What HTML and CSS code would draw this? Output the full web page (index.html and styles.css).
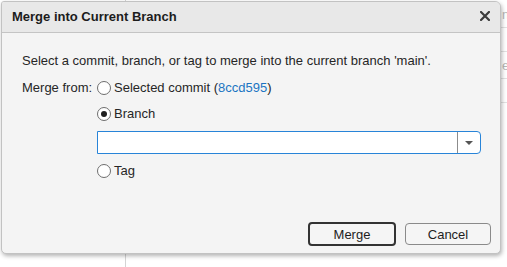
FILE: index.html
```html
<!DOCTYPE html>
<html lang="en">
<head>
    <meta charset="UTF-8">
    <meta name="viewport" content="width=device-width, initial-scale=1.0">
    <title>Merge into Current Branch</title>
    <link rel="stylesheet" href="styles.css">
</head>
<body>
    <div class="backdrop">
        <div class="side-pane"></div>
        <div class="main-pane">
            <div class="row">n</div>
            <div class="row"></div>
            <div class="row">e</div>
            <div class="row"></div>
        </div>
    </div>

    <div class="dialog">
        <div class="title-bar">
            <span class="title">Merge into Current Branch</span>
            <button class="close-button" aria-label="Close">
                <svg width="10" height="10" viewBox="0 0 10 10">
                    <path d="M1 1 L9 9 M9 1 L1 9" stroke="#3c3c3c" stroke-width="2.2" stroke-linecap="square"/>
                </svg>
            </button>
        </div>

        <div class="dialog-body">
            <p class="intro">Select a commit, branch, or tag to merge into the current branch 'main'.</p>

            <div class="merge-form">
                <div class="field-label">Merge from:</div>
                <div class="options">
                    <label class="option">
                        <input type="radio" name="source">
                        <span>Selected commit <a class="commit-link" href="#">(<span class="hash">8ccd595</span>)</a></span>
                    </label>
                    <label class="option">
                        <input type="radio" name="source" checked>
                        <span>Branch</span>
                    </label>
                    <div class="combo">
                        <input type="text" class="combo-input">
                        <span class="combo-button"><span class="arrow"></span></span>
                    </div>
                    <label class="option">
                        <input type="radio" name="source">
                        <span>Tag</span>
                    </label>
                </div>
            </div>
        </div>

        <div class="dialog-footer">
            <button class="btn btn-default">Merge</button>
            <button class="btn">Cancel</button>
        </div>
    </div>
</body>
</html>
```

FILE: styles.css
```css
* {
    margin: 0;
    padding: 0;
    box-sizing: border-box;
}

body {
    width: 507px;
    height: 267px;
    overflow: hidden;
    background: #ffffff;
    font-family: 'Liberation Sans', Arial, sans-serif;
    font-size: 13px;
    color: #262626;
    position: relative;
}

/* page behind the dialog */
.backdrop {
    display: flex;
    height: 100%;
}

.side-pane {
    flex: none;
    width: 126px;
    border-right: 1px solid #d4d4d4;
}

.main-pane {
    flex: 1;
    min-width: 0;
    display: flex;
    flex-direction: column;
    padding-top: 4px;
}

.main-pane .row {
    height: 24px;
    border-bottom: 1px solid #e2e2e2;
    padding-left: 376px;
    line-height: 22px;
    color: #b8b8b8;
    white-space: nowrap;
    overflow: hidden;
}

.main-pane .row:nth-child(3) {
    height: 27px;
    padding-top: 3px;
}

/* dialog */
.dialog {
    position: absolute;
    left: 1px;
    top: 1px;
    width: 500px;
    height: 253px;
    display: flex;
    flex-direction: column;
    background: #f4f4f4;
    border: 1px solid #c2c2c2;
    border-radius: 3px 6px 5px 5px;
    box-shadow: 1px 2px 4px rgba(0, 0, 0, 0.3);
    overflow: hidden;
}

.title-bar {
    height: 31px;
    display: flex;
    align-items: center;
    justify-content: space-between;
    padding: 0 10px 2px 10px;
    background: #e8e8e8;
    border-bottom: 1px solid #c4c4c4;
}

.title {
    font-weight: bold;
    font-size: 13px;
    color: #1c1c1c;
}

.close-button {
    border: none;
    background: none;
    display: flex;
    cursor: pointer;
}

.dialog-body {
    flex: 1;
    padding: 20px 19px 0 20px;
}

.intro {
    line-height: 16px;
}

.merge-form {
    display: flex;
    margin-top: 11px;
}

.field-label {
    width: 75px;
    line-height: 16px;
}

.options {
    flex: 1;
    display: flex;
    flex-direction: column;
    gap: 10px;
}

.option {
    display: flex;
    align-items: center;
    gap: 3px;
    line-height: 16px;
    cursor: pointer;
}

.option input {
    appearance: none;
    width: 14px;
    height: 14px;
    border: 1px solid #6e6e6e;
    border-radius: 50%;
    background: #ffffff;
    display: grid;
    place-content: center;
    margin: 0;
}

.option input:checked::before {
    content: "";
    width: 6px;
    height: 6px;
    border-radius: 50%;
    background: #1e1e1e;
}

.commit-link {
    color: #262626;
    text-decoration: none;
}

.commit-link .hash {
    color: #1b74c2;
}

.combo {
    display: flex;
    height: 23px;
    margin: -1px 0 -1px;
    border: 1px solid #2884d8;
    border-radius: 0 4px 4px 0;
    background: #ffffff;
}

.combo-input {
    flex: 1;
    border: none;
    outline: none;
    background: transparent;
    font: inherit;
    padding: 0 4px;
}

.combo-button {
    width: 23px;
    border-left: 1px solid #8c8c8c;
    display: flex;
    align-items: center;
    justify-content: center;
}

.arrow {
    width: 0;
    height: 0;
    border-left: 4px solid transparent;
    border-right: 4px solid transparent;
    border-top: 4px solid #555555;
}

.dialog-footer {
    display: flex;
    justify-content: flex-end;
    gap: 9px;
    padding: 0 9px 8px 0;
}

.btn {
    width: 86px;
    height: 22px;
    font: inherit;
    font-size: 13px;
    color: #1e1e1e;
    background: #f5f5f5;
    border: 1px solid #8a8a8a;
    border-radius: 4px;
    cursor: pointer;
}

.btn-default {
    width: 88px;
    height: 24px;
    border: 2px solid #333333;
    margin-top: -1px;
    margin-bottom: -1px;
}
```
